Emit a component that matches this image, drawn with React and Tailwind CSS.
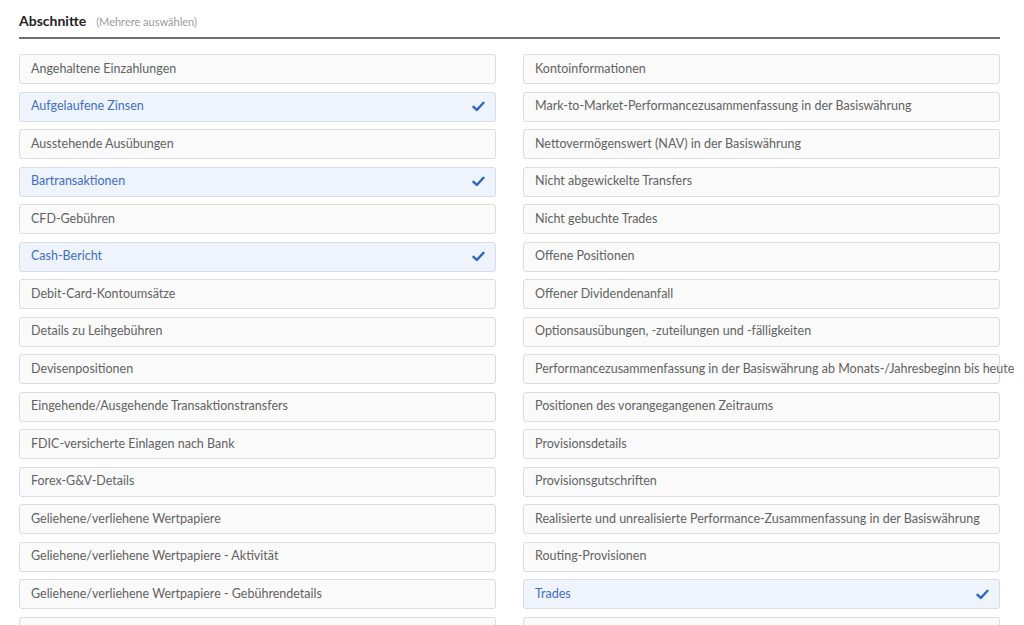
import React from 'react';

const LEFT = [
  ['Angehaltene Einzahlungen', false],
  ['Aufgelaufene Zinsen', true],
  ['Ausstehende Ausübungen', false],
  ['Bartransaktionen', true],
  ['CFD-Gebühren', false],
  ['Cash-Bericht', true],
  ['Debit-Card-Kontoumsätze', false],
  ['Details zu Leihgebühren', false],
  ['Devisenpositionen', false],
  ['Eingehende/Ausgehende Transaktionstransfers', false],
  ['FDIC-versicherte Einlagen nach Bank', false],
  ['Forex-G&V-Details', false],
  ['Geliehene/verliehene Wertpapiere', false],
  ['Geliehene/verliehene Wertpapiere - Aktivität', false],
  ['Geliehene/verliehene Wertpapiere - Gebührendetails', false],
  ['', false],
];

const RIGHT = [
  ['Kontoinformationen', false],
  ['Mark-to-Market-Performancezusammenfassung in der Basiswährung', false],
  ['Nettovermögenswert (NAV) in der Basiswährung', false],
  ['Nicht abgewickelte Transfers', false],
  ['Nicht gebuchte Trades', false],
  ['Offene Positionen', false],
  ['Offener Dividendenanfall', false],
  ['Optionsausübungen, -zuteilungen und -fälligkeiten', false],
  ['Performancezusammenfassung in der Basiswährung ab Monats-/Jahresbeginn bis heute', false],
  ['Positionen des vorangegangenen Zeitraums', false],
  ['Provisionsdetails', false],
  ['Provisionsgutschriften', false],
  ['Realisierte und unrealisierte Performance-Zusammenfassung in der Basiswährung', false],
  ['Routing-Provisionen', false],
  ['Trades', true],
  ['', false],
];

function Check() {
  return (
    <svg width="13" height="11" viewBox="0 0 13 11" className="shrink-0">
      <path d="M1.5 5.8 L4.8 9 L11.5 1.8" fill="none" stroke="#2a64c5" strokeWidth="2.4" strokeLinecap="round" strokeLinejoin="round" />
    </svg>
  );
}

function Item({ label, selected }) {
  return (
    <div
      className={`h-[30px] shrink-0 flex items-center justify-between pl-[11px] pr-[10px] rounded-[3px] border whitespace-nowrap text-[12.5px] ${
        selected ? 'bg-[#eef3fc] border-[#d6dce8] text-[#3f6fc4]' : 'bg-[#fafafa] border-[#dcdcdc] text-[#626262]'
      }`}
    >
      <span>{label}</span>
      {selected && <Check />}
    </div>
  );
}

export default function App() {
  return (
    <div className="w-[1024px] h-[625px] overflow-hidden bg-white" style={{ fontFamily: 'Lato, "Open Sans", sans-serif' }}>
      <div className="ml-[19px] w-[981px] pt-[12px]">
        {/* Header */}
        <div className="flex items-baseline gap-[10px] pb-[7px] border-b-2 border-[#6f6f6f]">
          <span className="text-[14px] leading-[17px] font-bold text-[#222]">Abschnitte</span>
          <span className="text-[11px] leading-[17px] text-[#9a9a9a]">(Mehrere auswählen)</span>
        </div>

        <div className="mt-[15px] grid grid-cols-2 gap-x-[27px]">
          <div className="flex flex-col gap-[7.5px]">
            {LEFT.map(([l, s], i) => <Item key={i} label={l} selected={s} />)}
          </div>
          <div className="flex flex-col gap-[7.5px]">
            {RIGHT.map(([l, s], i) => <Item key={i} label={l} selected={s} />)}
          </div>
        </div>
      </div>
    </div>
  );
}
